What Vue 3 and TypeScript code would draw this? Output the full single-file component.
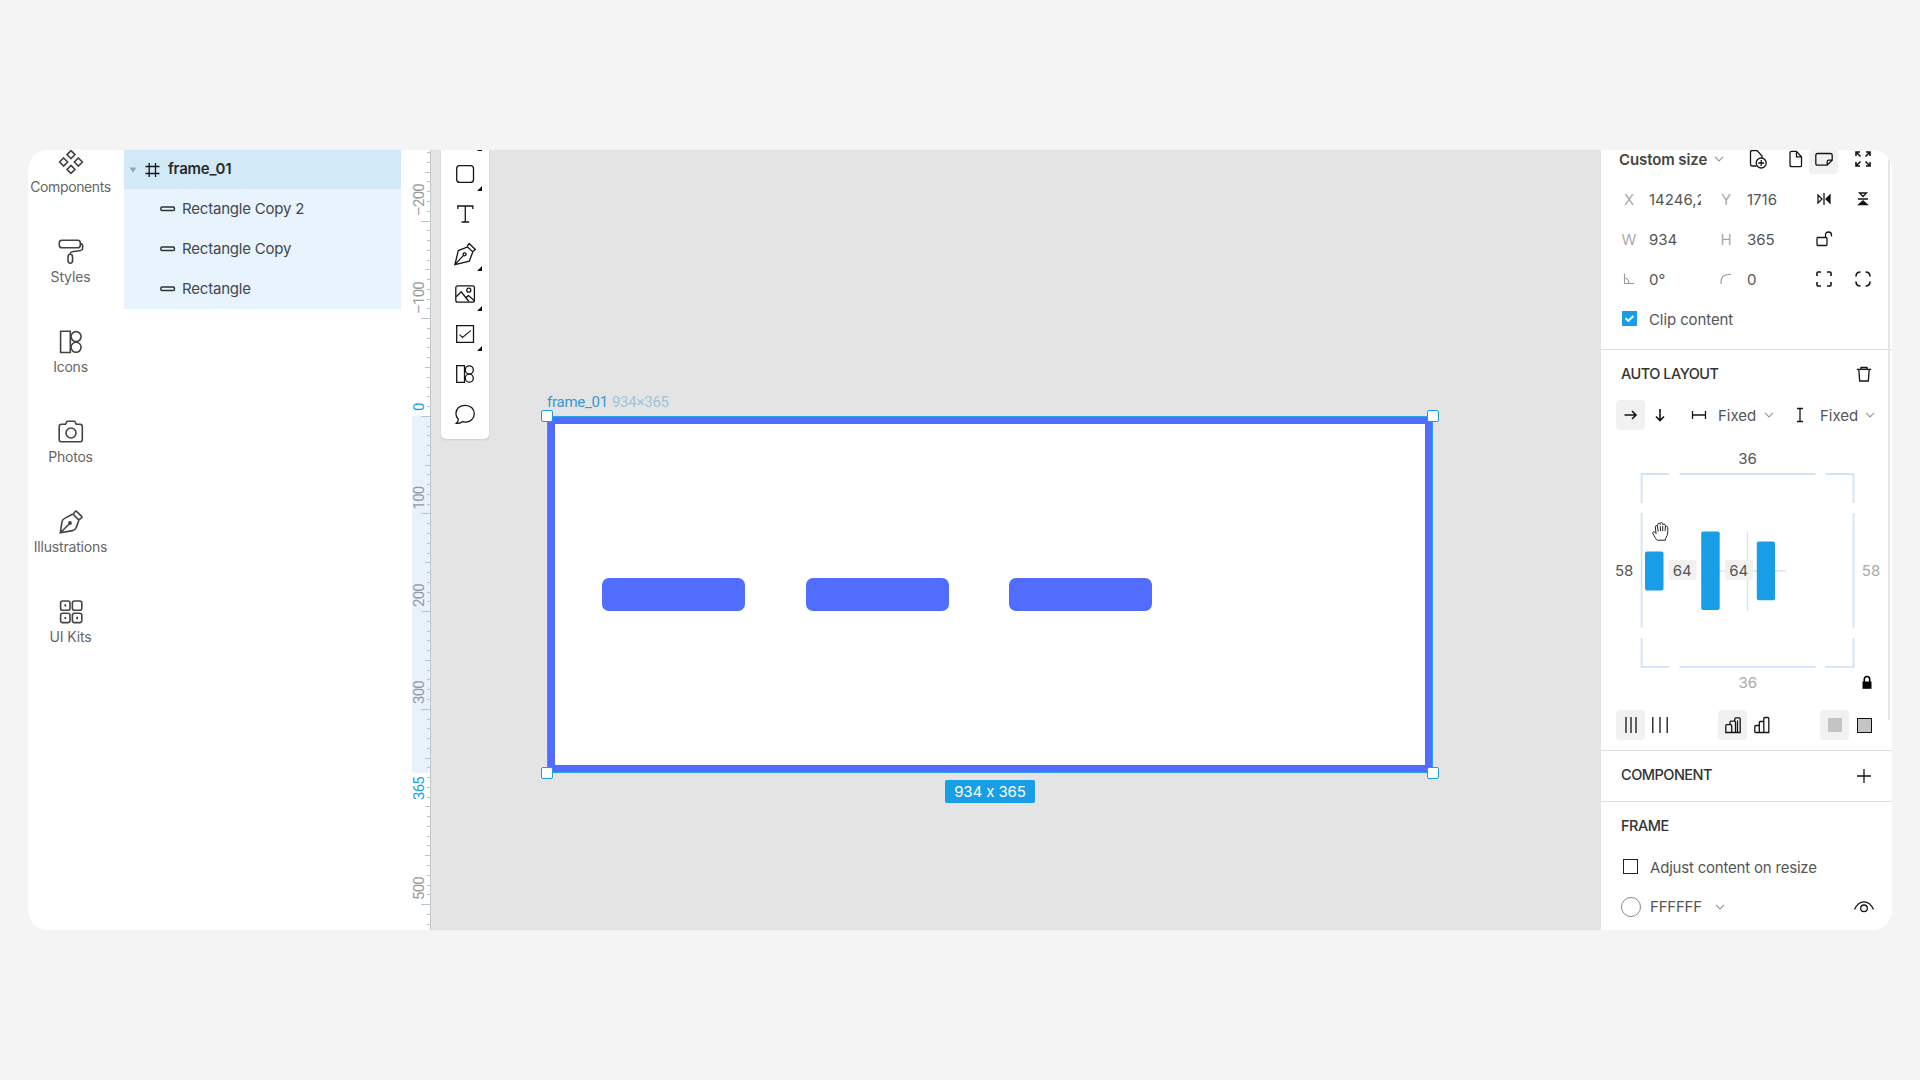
<script setup lang="ts">
interface Tick { y: number; x1: number }
interface RulerLabel { text: string; y: number; active: boolean }

const navItems: { id: string; label: string; spacing: string }[] = [
  { id: 'components', label: 'Components', spacing: '-0.4px' },
  { id: 'styles', label: 'Styles', spacing: '-0.15px' },
  { id: 'icons', label: 'Icons', spacing: '-0.25px' },
  { id: 'photos', label: 'Photos', spacing: '-0.25px' },
  { id: 'illustrations', label: 'Illustrations', spacing: '-0.2px' },
  { id: 'uikits', label: 'UI Kits', spacing: '-0.15px' },
]

const layers: string[] = ['Rectangle Copy 2', 'Rectangle Copy', 'Rectangle']

const tools: { id: string; more: boolean }[] = [
  { id: 'slice', more: true },
  { id: 'rect', more: true },
  { id: 'text', more: false },
  { id: 'pen', more: true },
  { id: 'image', more: true },
  { id: 'control', more: true },
  { id: 'icons', more: false },
  { id: 'comment', more: false },
]

// Ruler scale: canvas zero sits 266px below the window top.
const scale = 0.9765
const origin = 266.32
const ticks: Tick[] = []
for (let unit = -270; unit <= 520; unit += 10) {
  const y = Math.floor(origin + unit * scale) + 0.5
  if (y < 0 || y > 780) continue
  // The 400 mark has no label, so it is drawn as a medium tick.
  ticks.push({ y, x1: unit % 100 === 0 && unit !== 400 ? 9 : unit % 50 === 0 ? 13 : 15 })
}
const rulerLabels: RulerLabel[] = [
  { text: '–200', y: 66, active: false },
  { text: '–100', y: 164, active: false },
  { text: '0', y: 261, active: true },
  { text: '100', y: 359.5, active: false },
  { text: '200', y: 457, active: false },
  { text: '300', y: 554, active: false },
  { text: '365', y: 650, active: true },
  { text: '500', y: 750, active: false },
]
</script>

<template>
  <main class="stage">
    <section class="window">
      <nav class="nav">
        <div v-for="item in navItems" :key="item.id" class="nav-item">
          <svg width="26" height="26" viewBox="0 0 26 26" class="ico nav-ico">
            <template v-if="item.id === 'components'">
              <path d="M13 1.600l4 4-4 4-4-4zM5.600 9l4 4-4 4-4-4zM20.400 9l4 4-4 4-4-4zM13 16.400l4 4-4 4-4-4z" />
            </template>
            <template v-else-if="item.id === 'styles'">
              <rect x="1.300" y="1.200" width="21" height="7.600" rx="2.600" />
              <path d="M22.300 4.600q2.600.3 2.400 3v1.700q-.1 1.900-2 2.200l-8.500 1.300q-1.900.3-1.900 2.100M12.300 15q-2.300.3-2.300 3.400v2.900q0 3 2.300 3t2.300-3v-2.900q0-3.100-2.300-3.400z" />
            </template>
            <template v-else-if="item.id === 'icons'">
              <path d="M2.600 2.200h9.700v21.300H2.600z" /><circle cx="18.100" cy="7.600" r="5" /><circle cx="18.100" cy="18.300" r="5" />
            </template>
            <template v-else-if="item.id === 'photos'">
              <path d="M7.600 5.200l1-2.200q.4-.8 1.300-.8h6q.9 0 1.300.8l1 2.200h3.800q2.300 0 2.300 2.300v13q0 2.300-2.300 2.300H3.500q-2.300 0-2.300-2.300v-13q0-2.300 2.300-2.300z" />
              <circle cx="13" cy="14" r="5" />
            </template>
            <template v-else-if="item.id === 'illustrations'">
              <path d="M2.300 23.800l1.600-10.700q.4-2.600 2.700-3.700l7.300-3.900q.9-.5 1.600.2l4.700 4.700q.7.7.4 1.600l-2.400 6.600q-.9 2.500-3.600 3zM2.300 23.800L12 14.200M15.500 4.800l1.700-2.300q.6-.9 1.400-.1l5 5q.8.8-.1 1.400l-2.600 2.100" />
              <circle cx="12" cy="14" r="1.100" fill="#444" />
            </template>
            <template v-else>
              <rect x="2.600" y="2" width="9.400" height="9.300" rx="2" /><rect x="14.400" y="2" width="9.400" height="9.300" rx="2" />
              <rect x="2.600" y="14.300" width="9.400" height="9.300" rx="2" /><rect x="14.400" y="14.300" width="9.400" height="9.300" rx="2" />
              <path d="M7.200 6h.2v.8h-.2zM7.200 18.800h.2v.4h-.2zM19 18.600h.2v.8h-.2z" />
            </template>
          </svg>
          <span :style="{ letterSpacing: item.spacing }">{{ item.label }}</span>
        </div>
      </nav>

      <aside class="layers">
        <div class="layer root">
          <svg width="8" height="6" class="caret"><path d="M.5.500h7L4 5.500z" fill="#8fa5b3" /></svg>
          <svg width="15" height="16" class="ico hash"><path d="M4.200 1v14M10.500 1v14M.5 4.500h14M.5 11.500h14" /></svg>
          <span>frame_01</span>
        </div>
        <div v-for="layer in layers" :key="layer" class="layer child">
          <svg width="16" height="6" class="ico"><rect x=".9" y="1" width="13.500" height="3.500" rx="1" /></svg>
          <span>{{ layer }}</span>
        </div>
      </aside>

      <svg class="ruler" width="19" height="780">
        <path d="M0 266h19v357H2q-2 0-2-2z" fill="#e8f2fd" />
        <line v-for="t in ticks" :key="t.y" :x1="t.x1" x2="19" :y1="t.y" :y2="t.y" stroke="#bcc4cb" />
        <path d="M18.500 0v780" stroke="#c3c8cd" />
        <text v-for="l in rulerLabels" :key="l.text" :class="{ active: l.active }" :transform="`translate(11.500 ${l.y}) rotate(-90)`">{{ l.text }}</text>
      </svg>

      <div class="canvas">
        <div class="toolbar">
          <div v-for="tool in tools" :key="tool.id" class="tool">
            <svg width="24" height="24" viewBox="0 0 24 24" class="ico">
              <rect v-if="tool.id === 'rect'" x="3.700" y="3.600" width="16.800" height="16.800" rx="3" />
              <path v-else-if="tool.id === 'text'" d="M4.800 7V4h15v3M12.300 4v16M8.500 20h7.700" />
              <template v-else-if="tool.id === 'pen'">
                <path d="M1.900 22.600l3.400-14L14.600 5l5.200 4.900-3.500 9.300zM1.900 22.600l8.400-9M14 4.300L16.200 1.500l6.100 6-2.700 2.200" /><circle cx="11.600" cy="12.300" r="1.500" />
              </template>
              <template v-else-if="tool.id === 'image'">
                <rect x="2.800" y="3.800" width="18.600" height="16.400" rx="2" /><circle cx="15.800" cy="8.200" r="2" />
                <path d="M3.200 14.700l5-4.900 7.700 9.700M12.700 15.600l2.800-2 5.700 5" />
              </template>
              <template v-else-if="tool.id === 'control'">
                <path d="M3.700 3.700h16.800v16.600H3.700z" /><path d="M6.500 12.700l3 2.800L18 8.300" stroke-width="1.100" />
              </template>
              <template v-else-if="tool.id === 'icons'">
                <path d="M3.700 3.700H11.500v16.600H3.700z" /><circle cx="16.300" cy="7.900" r="4" /><circle cx="16.300" cy="16.200" r="4" />
              </template>
              <path v-else-if="tool.id === 'comment'" d="M5.300 17.300C3.500 15.600 2.900 13.600 2.900 11.600c0-5 4-8.300 9.400-8.300s9 3.700 9 8.500-4 8.300-9 8.300c-1.200 0-2 0-3-.4-1.500 1.200-3.500 1.900-6 1.700 1.300-1 2-2.400 2-4.100z" />
            </svg>
            <i v-if="tool.more" class="more"></i>
          </div>
        </div>

        <div class="frame-title"><b>frame_01</b><span>934×365</span></div>
        <div class="artboard">
          <div class="pill"></div>
          <div class="pill"></div>
          <div class="pill"></div>
          <i class="handle tl"></i><i class="handle tr"></i><i class="handle bl"></i><i class="handle br"></i>
        </div>
        <div class="size-badge">934 x 365</div>
      </div>

      <aside class="inspector">
        <div class="row preset">
          <strong>Custom size</strong>
          <svg width="10" height="6" class="chev"><path d="M1 .8l4 4 4-4" /></svg>
          <svg width="20" height="22" class="ico add-doc"><path d="M8.500 18H4.200Q2.500 18 2.500 16.300V4.200Q2.500 2.500 4.200 2.500H9l5 5.500v2" /><circle cx="13.200" cy="15" r="5" /><path d="M13.200 12v6M10.200 15h6" /></svg>
          <svg width="14" height="20" class="ico doc"><path d="M1 4q0-1.700 1.700-1.700H7.500l5 5.500v8.700q0 1.200-1.200 1.200H2.700Q1 17.700 1 16zM7.500 2.300v5.500h5" /></svg>
          <span class="chip preset-chip"><svg width="20" height="16" class="ico"><path d="M3.500 2.500h13q1.700 0 1.700 1.700v5l-5 5H3.500q-1.700 0-1.700-1.700V4.200q0-1.700 1.700-1.700zM18.200 9.200h-3.500q-1.500 0-1.500 1.500v3.500" /></svg></span>
          <svg width="16" height="16" class="ico bold expand"><path d="M1 5V1h4M11 1h4v4M15 11v4h-4M5 15H1v-4M1 1l4.500 4.500M15 1l-4.500 4.500M15 15l-4.500-4.500M1 15l4.500-4.500" /></svg>
        </div>

        <div class="row props">
          <em>X</em><span class="val clip">14246,2</span><em>Y</em><span class="val">1716</span>
          <svg width="16" height="14" class="ico"><path d="M2 3v8l4-4zM8 1v12" /><path d="M14 3v8l-4-4z" fill="#111" /></svg>
          <svg width="16" height="16" class="ico last"><path d="M4.500 2h7L8 5.500zM3 8h10" /><path d="M3.800 13.500h8.400L8 9.800z" fill="#111" /></svg>
        </div>
        <div class="row props">
          <em>W</em><span class="val">934</span><em>H</em><span class="val">365</span>
          <svg width="18" height="16" class="ico"><rect x="1" y="6.500" width="10" height="8" rx="1" /><path d="M9.500 6.500V4q0-3 3-3t3 3v1.500" /></svg>
        </div>
        <div class="row props">
          <em><svg width="12" height="12" class="gray"><path d="M1.500.5v10H11M1.500 5q4.500.8 4.500 5.500" /></svg></em><span class="val">0°</span>
          <em><svg width="12" height="12" class="gray"><path d="M1 11V9.500Q1 1.500 9 1.500h2" /></svg></em><span class="val">0</span>
          <svg width="16" height="16" class="ico bold"><path d="M1 5V2q0-1 1-1h3M11 1h3q1 0 1 1v3M15 11v3q0 1-1 1h-3M5 15H2q-1 0-1-1v-3" /></svg>
          <svg width="16" height="16" class="ico bold last"><path d="M1 5.500Q1 1 5.500 1M10.500 1Q15 1 15 5.500M15 10.500q0 4.500-4.500 4.500M5.500 15Q1 15 1 10.500" /></svg>
        </div>
        <div class="row check">
          <i class="box on"><svg width="15" height="15"><path d="M3.500 7.300l2.800 2.700 5-5" fill="none" stroke="#fff" stroke-width="1.900" /></svg></i>
          <span>Clip content</span>
        </div>

        <div class="section auto">
          <header class="head"><h4>AUTO LAYOUT</h4>
            <svg width="16" height="16" class="ico"><path d="M1 3.300h14M5 3V1.500h6V3M2.800 3.500l.9 11.500h8.600l.9-11.500" /></svg>
          </header>
          <div class="direction">
            <span class="chip"><svg width="14" height="12" class="ico bold"><path d="M.5 6H12M8 2l4 4-4 4" /></svg></span>
            <svg width="12" height="14" class="ico bold down"><path d="M6 1v11.500M2 8.500l4 4 4-4" /></svg>
            <svg width="16" height="10" class="ico hfix"><path d="M1.500 1v8M14.500 1v8M1.500 5h13" /></svg>
            <span class="fixed">Fixed</span>
            <svg width="10" height="6" class="chev"><path d="M1 .8l4 4 4-4" /></svg>
            <svg width="8" height="16" class="ico vfix"><path d="M1 1.500h6M1 14.500h6M4 1.500v13" /></svg>
            <span class="fixed">Fixed</span>
            <svg width="10" height="6" class="chev"><path d="M1 .8l4 4 4-4" /></svg>
          </div>
          <svg class="padding" width="285" height="260" viewBox="0 440 285 260">
            <g stroke="#cfe5f7" stroke-width="1.800" fill="none">
              <path d="M40.600 503v-29H68M78.500 474h136M224.500 474h28V503M252.500 513v114.500M252.500 638v28.800h-28M214.500 666.800h-136M68 666.800H40.600V638M40.600 627.500V513" />
              <path d="M107 571h78M146.500 531.500v79" stroke-width="1.400" />
            </g>
            <g fill="#189ee6">
              <rect x="44" y="551.500" width="18.500" height="39" rx="2" />
              <rect x="100.200" y="531.500" width="18.500" height="78.500" rx="2" />
              <rect x="155.800" y="541.500" width="18.200" height="58.700" rx="2" />
            </g>
            <g fill="#f1f1f1"><rect x="67.500" y="560" width="28" height="20" rx="3" /><rect x="123.800" y="560" width="28" height="20" rx="3" /></g>
            <g class="nums">
              <text x="146.500" y="464">36</text><text x="23.200" y="576">58</text>
              <text x="81.300" y="576">64</text><text x="137.700" y="576">64</text>
              <text x="270" y="576" class="dim">58</text><text x="146.800" y="688" class="dim">36</text>
            </g>
            <path class="hand" d="M56.300 540.200c-1.500-1-2.600-3.500-4.500-6.800-.7-1.300 1-2.300 2-1.200l1.300 1.300-.8-6.400c-.2-1.700 1.900-2 2.200-.4l.3-2.300c.2-1.600 2.300-1.500 2.400 0v-.7c.2-1.700 2.400-1.600 2.500 0l.2 1.200c.4-1.300 2.300-1 2.400.4l.1 1.700c.6-1.200 2.200-.9 2.300.5.300 4.200.1 7.500-1.500 9.800-.6.900-.8 1.800-.8 2.900zM56.500 527l.8 4.500M59.200 526l.3 5M61.700 526v5M64.300 527l-.2 4" />
            <path d="M261.500 681.500h9v7.300h-9z" fill="#000" /><path d="M263.300 682v-2.800q0-2.700 2.700-2.700t2.700 2.700v2.800" fill="none" stroke="#000" stroke-width="1.600" />
          </svg>
          <div class="aligns">
            <div class="pair">
              <span class="chip"><svg width="14" height="18" class="ico"><path d="M2 1v16M7 1v16M12 1v16" /></svg></span>
              <svg width="18" height="18" class="ico second"><path d="M1.800 1v16M9 1v16M16.200 1v16" /></svg>
            </div>
            <div class="pair">
              <span class="chip"><svg width="18" height="18" class="ico"><path d="M1.800 9.700q0-1 1-1h3.900q1 0 1 1v6.800H1.800zM6 8.500V6.200q0-1 1-1h3.500q1 0 1 1v10.300H7.700M10.800 5V2.800q0-1 1-1h3.400q1 0 1 1v13.700h-4.700M13.500 4.500v12" /></svg></span>
              <svg width="18" height="18" class="ico second"><path d="M1.800 16.500v-6q0-1 1-1h3.500M6.300 16.500V6.500q0-1 1-1h3.500M1.800 16.500h14V2.500q0-1-1-1h-3q-1 0-1 1v14" /></svg>
            </div>
            <div class="pair">
              <span class="chip"><i class="fill"></i></span><i class="fill outlined second"></i>
            </div>
          </div>
        </div>

        <div class="section component">
          <h4>COMPONENT</h4>
          <svg width="16" height="16" class="ico"><path d="M1 8h14M8 1v14" /></svg>
        </div>

        <div class="section frame-sec">
          <h4>FRAME</h4>
          <div class="row check resize"><i class="box"></i><span>Adjust content on resize</span></div>
          <div class="row color">
            <i class="swatch"></i><span>FFFFFF</span>
            <svg width="10" height="6" class="chev"><path d="M1 .8l4 4 4-4" /></svg>
            <svg width="22" height="14" class="ico eye"><path d="M1.500 9.500Q5 1.800 11 1.800T20.500 9.500" /><circle cx="11" cy="8.300" r="3.300" /></svg>
          </div>
        </div>
        <i class="scrollbar"></i>
      </aside>
    </section>
  </main>
</template>

<style>
body { margin: 0; background: #f4f4f4; }
</style>

<style scoped>
* { box-sizing: border-box; }
.stage { height: 1080px; padding: 150px 28px; background: #f4f4f4; font-family: Inter, "Liberation Sans", sans-serif; color: #555; font-size: 15px; }
.window { display: flex; width: 1864px; height: 780px; border-radius: 20px; background: #fff; overflow: hidden; }
svg { display: block; flex: none; }
.ico { fill: none; stroke: #151515; stroke-width: 1.3; }
.ico.bold { stroke-width: 1.6; }
.gray { fill: none; stroke: #999; stroke-width: 1.1; }
.chev { fill: none; stroke: #999; stroke-width: 1.2; }

.nav { flex: none; width: 85px; margin-right: 11px; margin-top: -1px; }
.nav-item { height: 90px; display: flex; flex-direction: column; align-items: center; font-size: 14px; line-height: 20px; color: #666; }
.ico.nav-ico { stroke: #444; stroke-width: 1.6; margin-bottom: 2px; }
.nav-item span { white-space: nowrap; }

.layers { flex: none; width: 277px; margin-right: 11px; }
.layer { height: 40px; display: flex; align-items: center; background: #e9f3fd; font-size: 15px; letter-spacing: -0.2px; color: #414850; white-space: nowrap; }
.layer span { padding-bottom: 2px; }
.layer.root { height: 39px; padding-left: 5px; background: #d2eaf8; color: #2a2a2a; font-weight: 600; letter-spacing: -0.25px; }
.hash { margin: 0 8px 0 8px; }
.layer.child { padding-left: 36px; }
.layer.child span { margin-left: 6px; }
.layer.child svg { stroke-width: 1.5; stroke: #2b3238; margin-bottom: 1px; }

.ruler { overflow: visible; }
.ruler text { font-family: Roboto, sans-serif; font-size: 15px; fill: #999; letter-spacing: -0.8px; }
.ruler text.active { fill: #189ee6; }

.canvas { position: relative; flex: 1; background: #e4e4e4; }
.toolbar { position: absolute; left: 10px; top: 0; width: 48px; height: 289px; overflow: hidden; border-radius: 0 0 5px 5px; background: #fff; box-shadow: 0 1px 2px rgba(0, 0, 0, .12); }
.tool { position: relative; height: 40px; display: flex; align-items: center; justify-content: center; }
.tool:first-child { height: 4px; }
.tool:first-child svg { display: none; }
.more { position: absolute; right: 7px; bottom: 3px; border-left: 5px solid transparent; border-bottom: 5px solid #111; }
.frame-title { position: absolute; left: 116px; top: 242px; font: 15px/20px Roboto, sans-serif; letter-spacing: -0.25px; color: #9dc4da; white-space: nowrap; }
.frame-title b { font-weight: 400; color: #3a97cf; margin-right: 4px; }
.artboard { position: absolute; left: 116px; top: 266px; width: 886px; height: 357px; display: flex; gap: 60.500px; padding: 154px 0 0 47px; background: #fff; border: 8px solid #516dff; outline: 1px solid #2f9fe8; outline-offset: -1px; }
.pill { flex: none; width: 143px; height: 33px; border-radius: 7px; background: #516dff; }
.handle { position: absolute; width: 12px; height: 12px; border: 1px solid #189ee6; border-radius: 2px; background: #fff; }
.tl { left: -14px; top: -14px; } .tr { right: -14px; top: -14px; }
.bl { left: -14px; bottom: -14px; } .br { right: -14px; bottom: -14px; }
.size-badge { position: absolute; left: 514px; top: 630px; width: 90px; height: 23px; border-radius: 2px; background: #189ee6; color: #fff; font-size: 15px; line-height: 23px; text-align: center; letter-spacing: -0.1px; white-space: nowrap; font-feature-settings: "calt" 0; }

.inspector { position: relative; flex: none; width: 291px; background: #fff; }
.row { display: flex; align-items: center; height: 40px; white-space: nowrap; }
.chip { display: flex; align-items: center; justify-content: center; width: 29px; height: 30px; border-radius: 4px; background: #f1f1f1; }
.preset { height: 30px; margin: -6px 0 5px; padding-left: 18px; }
.preset strong { width: 95px; font-weight: 600; color: #444; letter-spacing: -0.1px; }
.add-doc { margin-left: 24px; }
.doc { margin-left: 21px; }
.preset-chip { margin-left: 6px; }
.expand { margin-left: 17px; }
.props { display: grid; grid-template-columns: 30px 54px 46px 56px 54px 16px; padding-left: 17px; }
.props em { font-style: normal; color: #aaa; width: 22px; display: flex; justify-content: center; }
.props .val { margin-left: 1px; }
.props .clip { width: 52px; overflow: hidden; }
.props > em:nth-child(3) { margin-left: 13px; }
.props .val:nth-child(4) { margin-left: -1px; }
.props > svg:nth-child(5) { margin-left: 12px; }
.props > svg:nth-child(6) { margin-left: -3px; }
.check { padding-left: 21px; }
.check span { letter-spacing: -0.1px; }
.box { width: 15px; height: 15px; margin-right: 12px; border: 1.500px solid #222; flex: none; }
.box.on { background: #189ee6; border: 0; margin-top: -2px; }

h4 { margin: 0; font-size: 14.500px; line-height: 20px; font-weight: 500; color: #333; letter-spacing: -0.5px; }
.section { border-top: 1px solid #dedede; }
.auto { margin-top: 10px; height: 401px; }
.head { display: flex; justify-content: space-between; padding: 14px 20px 0 20px; }
.head svg { margin-top: 2px; }
.direction { display: flex; align-items: center; height: 30px; margin: 16px 0 0 15px; }
.down { margin-left: 9px; } .hfix { margin-left: 25px; } .vfix { margin-left: 22px; }
.fixed { width: 46px; margin-left: 11px; }
.vfix + .fixed { margin-left: 16px; width: 45px; }
.padding { margin-top: 10px; }
.nums { font-size: 15px; fill: #555; text-anchor: middle; }
.nums .dim { fill: #aaa; }
.hand { fill: #fff; stroke: #222; stroke-width: 1; }
.aligns { display: flex; margin: 10px 0 0 15px; }
.pair { flex: none; display: flex; align-items: center; width: 102px; }
.pair:last-child { width: 60px; }
.second { margin-left: 6px; }
.fill { width: 14px; height: 14px; background: #c4c4c4; }
.fill.outlined { width: 15px; height: 15px; border: 1.500px solid #111; margin-left: 8px; }
.component { height: 51px; display: flex; align-items: center; justify-content: space-between; padding: 0 20px; }
.component h4 { margin-top: -2px; }
.frame-sec h4 { padding: 14px 20px 0; }
.resize { margin-top: 12px; padding-left: 22px; }
.resize span { letter-spacing: -0.2px; margin-top: -1px; }
.resize .box { margin-top: -3px; }
.color { padding-left: 20px; height: 38px; letter-spacing: -0.2px; }
.color span { margin-top: -1px; }
.swatch { width: 20px; height: 20px; margin-right: 9px; border: 1px solid #888; border-radius: 50%; }
.color .chev { margin-left: 13px; }
.eye { margin-left: auto; margin-right: 17px; }
.scrollbar { position: absolute; right: 2px; top: 3px; width: 2px; height: 567px; background: #e5e5e5; border-radius: 1px; }
</style>
